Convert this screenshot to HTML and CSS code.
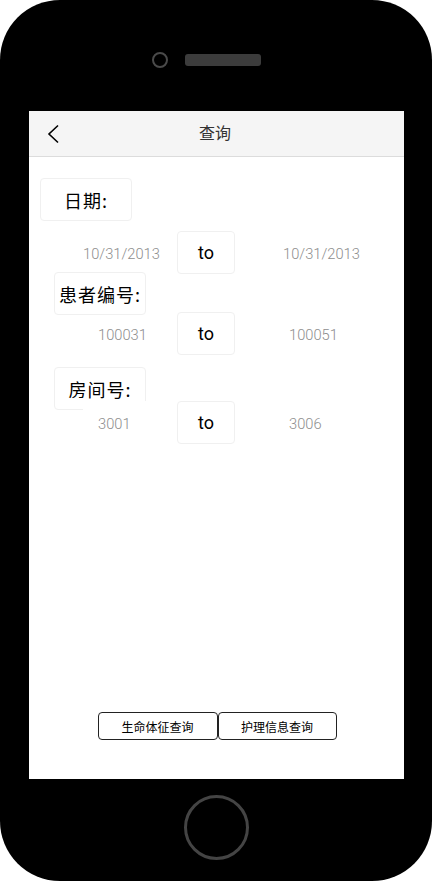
FILE: index.html
```html
<!DOCTYPE html>
<html lang="zh">
<head>
<meta charset="utf-8">
<title>查询</title>
<link rel="stylesheet" href="styles.css">
</head>
<body>
<div class="phone">
  <div class="bezel-top">
    <span class="camera"></span>
    <span class="speaker"></span>
  </div>
  <div class="screen">
    <div class="header">
      <div class="back">
        <svg width="14" height="20" viewBox="0 0 14 20"><polyline points="11,1.5 2,10 11,18.5" fill="none" stroke="#000" stroke-width="1.6"/></svg>
      </div>
      <div class="title">查询</div>
      <div></div>
    </div>
    <div class="content">
      <div class="label label-date">日期:</div>
      <div class="row row-date">
        <div class="val-left">10/31/2013</div>
        <div class="to">to</div>
        <div class="val-right">10/31/2013</div>
      </div>
      <div class="label label-patient">患者编号:</div>
      <div class="row row-patient">
        <div class="val-left">100031</div>
        <div class="to">to</div>
        <div class="val-right">100051</div>
      </div>
      <div class="label label-room">房间号:</div>
      <div class="row row-room">
        <div class="val-left">3001</div>
        <div class="to">to</div>
        <div class="val-right">3006</div>
      </div>
      <div class="actions">
        <button class="btn">生命体征查询</button>
        <button class="btn">护理信息查询</button>
      </div>
    </div>
  </div>
  <div class="bezel-bottom">
    <span class="home"></span>
  </div>
</div>
</body>
</html>
```

FILE: styles.css
```css
* { box-sizing: border-box; }
html, body { margin: 0; padding: 0; background: #fff; }
body { font-family: Roboto, "Noto Sans CJK SC", sans-serif; }

.phone {
  width: 432px;
  height: 881px;
  background: #000;
  border-radius: 60px;
  display: flex;
  flex-direction: column;
  overflow: hidden;
}

.bezel-top {
  height: 111px;
  display: flex;
  align-items: flex-start;
  padding-top: 52px;
  padding-left: 152px;
}
.camera {
  width: 16px;
  height: 16px;
  border: 2.5px solid #4a4a4a;
  border-radius: 50%;
}
.speaker {
  width: 76px;
  height: 12px;
  margin-left: 17px;
  margin-top: 2px;
  background: #3c3c3c;
  border-radius: 3px;
}

.screen {
  margin-left: 29px;
  width: 375px;
  height: 668px;
  background: #fff;
  display: flex;
  flex-direction: column;
}

.header {
  height: 46px;
  background: #f5f5f5;
  border-bottom: 1px solid #dcdcdc;
  display: grid;
  grid-template-columns: 1fr auto 1fr;
  align-items: center;
}
.back { padding-left: 18px; display: flex; align-items: center; padding-top: 1px; }
.back svg { display: block; }
.title {
  font-family: "Noto Sans CJK SC", sans-serif;
  font-size: 16px;
  color: #333;
  margin-left: -3px;
  margin-top: -4px;
}

.content {
  flex: 1;
  display: flex;
  flex-direction: column;
}

.label {
  width: 92px;
  height: 43px;
  border: 1px solid #f0f0f0;
  border-radius: 4px;
  background: #fff;
  display: flex;
  align-items: center;
  justify-content: center;
  font-family: "Noto Sans CJK SC", sans-serif;
  font-size: 18px;
  color: #000;
  letter-spacing: 1px;
}
.label-date { margin-top: 21px; margin-left: 11px; }
.label-patient { margin-top: -2px; margin-left: 25px; }
.label-room { margin-top: 12px; margin-left: 25px; }

.row {
  display: grid;
  grid-template-columns: 94px 58px 1fr;
  margin-left: 54px;
  height: 43px;
  align-items: stretch;
}
.row-date { margin-top: 10px; }
.row-patient { margin-top: -3px; }
.row-room { margin-top: -9px; }

.val-left, .val-right {
  background: #fff;
  display: flex;
  align-items: center;
  font-size: 14.7px;
  font-weight: 300;
  color: #8e8e8e;
  padding-top: 2px;
}
.row-patient .val-left { background: transparent; }
.row-patient .val-left, .row-room .val-left { padding-left: 15px; }
.val-right { padding-left: 48px; }
.row-patient .val-right, .row-room .val-right { padding-left: 54px; }

.to {
  border: 1px solid #f0f0f0;
  border-radius: 4px;
  background: #fff;
  display: flex;
  align-items: center;
  justify-content: center;
  font-size: 18px;
  color: #000;
}

.actions {
  margin-top: auto;
  margin-bottom: 39px;
  display: flex;
  justify-content: center;
  padding-left: 1px;
}
.btn {
  width: 120px;
  height: 28px;
  margin: 0;
  padding: 0;
  border: 1px solid #222;
  border-radius: 4px;
  background: #fff;
  font-family: "Noto Sans CJK SC", sans-serif;
  font-size: 12px;
  color: #000;
}
.btn + .btn { width: 119px; }

.bezel-bottom {
  flex: 1;
  display: flex;
  justify-content: center;
  align-items: flex-start;
  padding-top: 16px;
}
.home {
  width: 65px;
  height: 65px;
  border: 3.3px solid #444;
  border-radius: 50%;
}
```
